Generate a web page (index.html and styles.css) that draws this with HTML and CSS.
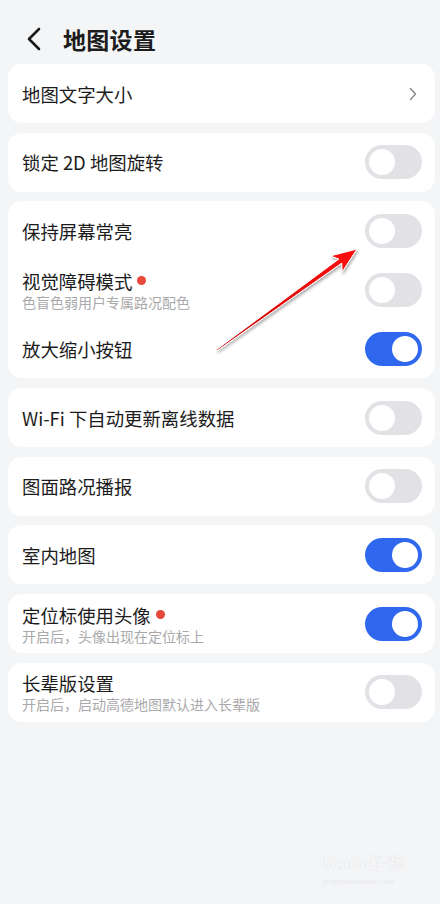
FILE: index.html
```html
<!DOCTYPE html>
<html lang="zh-CN">
<head>
    <meta charset="UTF-8">
    <meta name="viewport" content="width=device-width, initial-scale=1.0">
    <title>地图设置</title>
    <link rel="stylesheet" href="styles.css">
</head>
<body>
    <header class="topbar">
        <svg class="back" width="16" height="24" viewBox="0 0 16 24">
            <path d="M13 2 L3 12 L13 22" fill="none" stroke="#1a1a1a" stroke-width="2.6" stroke-linecap="round" stroke-linejoin="round"/>
        </svg>
        <h1>地图设置</h1>
    </header>

    <main class="list">
        <section class="card">
            <div class="row">
                <div class="label"><span class="title">地图文字大小</span></div>
                <svg class="more" width="8" height="14" viewBox="0 0 8 14">
                    <path d="M1.5 1.5 L6.5 7 L1.5 12.5" fill="none" stroke="#8a8a8a" stroke-width="1.4" stroke-linecap="round" stroke-linejoin="round"/>
                </svg>
            </div>
        </section>

        <section class="card">
            <div class="row">
                <div class="label"><span class="title">锁定 2D 地图旋转</span></div>
                <span class="switch"></span>
            </div>
        </section>

        <section class="card">
            <div class="row">
                <div class="label"><span class="title">保持屏幕常亮</span></div>
                <span class="switch"></span>
            </div>
            <div class="row">
                <div class="label">
                    <span class="title">视觉障碍模式<i class="dot"></i></span>
                    <span class="sub">色盲色弱用户专属路况配色</span>
                </div>
                <span class="switch"></span>
            </div>
            <div class="row">
                <div class="label"><span class="title">放大缩小按钮</span></div>
                <span class="switch on"></span>
            </div>
        </section>

        <section class="card">
            <div class="row">
                <div class="label"><span class="title">Wi-Fi 下自动更新离线数据</span></div>
                <span class="switch"></span>
            </div>
        </section>

        <section class="card">
            <div class="row">
                <div class="label"><span class="title">图面路况播报</span></div>
                <span class="switch"></span>
            </div>
        </section>

        <section class="card">
            <div class="row">
                <div class="label"><span class="title">室内地图</span></div>
                <span class="switch on"></span>
            </div>
        </section>

        <section class="card">
            <div class="row">
                <div class="label">
                    <span class="title">定位标使用头像<i class="dot"></i></span>
                    <span class="sub">开启后，头像出现在定位标上</span>
                </div>
                <span class="switch on"></span>
            </div>
        </section>

        <section class="card">
            <div class="row">
                <div class="label">
                    <span class="title">长辈版设置</span>
                    <span class="sub">开启后，启动高德地图默认进入长辈版</span>
                </div>
                <span class="switch"></span>
            </div>
        </section>
    </main>

    <!-- annotation arrow drawn over the screenshot -->
    <svg class="arrow" width="440" height="904" viewBox="0 0 440 904">
        <defs>
            <linearGradient id="red" x1="217" y1="350" x2="357" y2="249" gradientUnits="userSpaceOnUse">
                <stop offset="0" stop-color="#c80000"/>
                <stop offset="1" stop-color="#ff1010"/>
            </linearGradient>
            <filter id="shade" x="-20%" y="-20%" width="140%" height="140%">
                <feDropShadow dx="1" dy="2" stdDeviation="1.5" flood-color="#000" flood-opacity="0.35"/>
            </filter>
        </defs>
        <polygon points="216.6,349.5 338.8,259.1 330.4,255.9 357,249 342.1,272.1 341.8,263.1 217.4,350.5"
                 fill="url(#red)" stroke="#fff" stroke-width="1" stroke-linejoin="round" filter="url(#shade)"/>
    </svg>

    <div class="mark">
        <div class="mark-top">Baidu经验</div>
        <div class="mark-url">jingyan.baidu.com</div>
    </div>
</body>
</html>
```

FILE: styles.css
```css
body {
    margin: 0;
    background-color: #f4f5f7;
    font-family: "Noto Sans CJK SC", "Noto Sans", sans-serif;
    color: #1c1c1c;
    min-height: 904px;
    position: relative;
}

.topbar {
    height: 64px;
    box-sizing: border-box;
    padding: 14px 0 0 26px;
    display: flex;
    align-items: center;
    gap: 21px;
}

.topbar h1 {
    margin: 0;
    font-size: 23px;
    font-weight: 700;
    line-height: 50px;
    letter-spacing: 0.3px;
}

.list {
    display: flex;
    flex-direction: column;
    gap: 9.7px;
    padding: 0 5px 0 8px;
}

.card {
    background-color: #fff;
    border-radius: 14px;
}

.row {
    height: 59px;
    display: flex;
    align-items: center;
    justify-content: space-between;
    padding: 0 13px 0 14px;
}

.label {
    display: flex;
    flex-direction: column;
}

.title {
    font-size: 18.4px;
    line-height: 26px;
    display: flex;
    align-items: center;
}

.sub {
    font-size: 14px;
    line-height: 20px;
    color: #a9a9ab;
    margin-top: -2px;
}

.dot {
    width: 9px;
    height: 9px;
    border-radius: 50%;
    background-color: #e8483b;
    margin-left: 5px;
}

.more {
    margin-right: 5px;
}

.switch {
    width: 57px;
    height: 34px;
    border-radius: 17px;
    background-color: #e2e2e6;
    position: relative;
    flex-shrink: 0;
}

.switch::after {
    content: "";
    position: absolute;
    top: 4px;
    left: 4px;
    width: 26px;
    height: 26px;
    border-radius: 50%;
    background-color: #fff;
}

.switch.on {
    background-color: #2f68ef;
}

.switch.on::after {
    left: 27px;
}

.arrow {
    position: absolute;
    top: 0;
    left: 0;
    pointer-events: none;
}

.mark {
    position: absolute;
    left: 323px;
    top: 852px;
    color: #f6f7f8;
    text-shadow: 0 0 1px #d4d5d8;
    font-family: "Liberation Sans", "Noto Sans CJK SC", sans-serif;
    font-weight: 700;
}

.mark-top {
    font-size: 17px;
    line-height: 24px;
}

.mark-url {
    font-size: 8px;
    line-height: 12px;
    font-weight: 400;
    letter-spacing: 0.4px;
}
```
